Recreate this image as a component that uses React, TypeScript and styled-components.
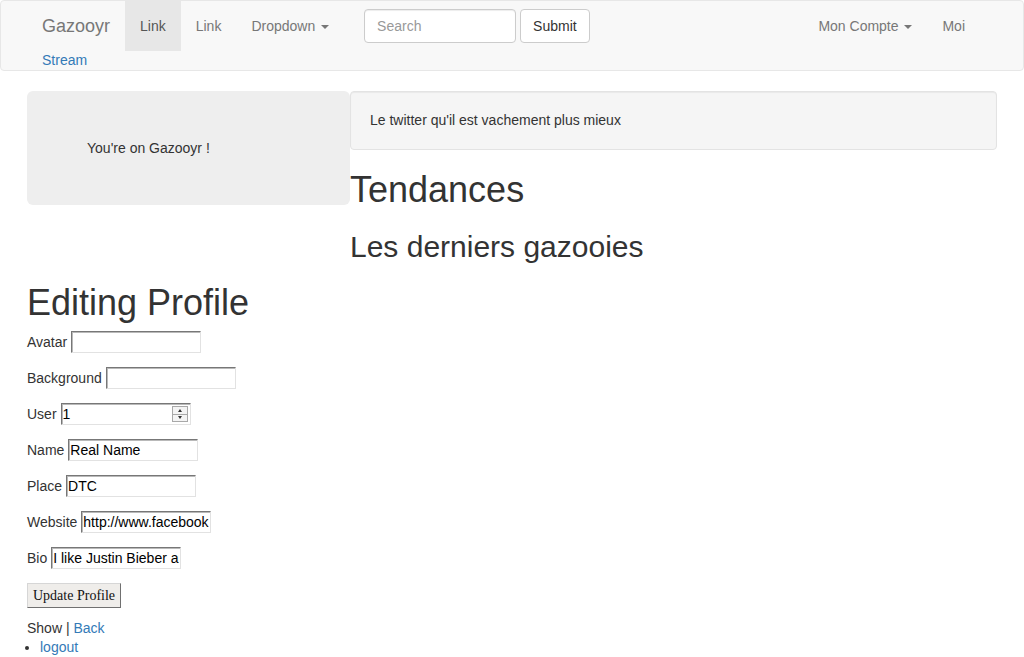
import React from "react";
import styled, { createGlobalStyle } from "styled-components";

const Global = createGlobalStyle`
  html, body { margin: 0; padding: 0; background: #fff; }
  body {
    font-family: "Liberation Sans", Arial, sans-serif;
    font-size: 14px;
    line-height: 1.42857;
    color: #333;
  }
  * { box-sizing: border-box; }
`;

const Navbar = styled.nav`
  background: #f8f8f8;
  border: 1px solid #e7e7e7;
  border-radius: 4px;
  margin-bottom: 20px;
`;

const Container = styled.div<{ $pad?: number }>`
  width: 970px;
  margin: 0 auto;
  padding: 0 ${(p) => p.$pad ?? 0}px;
`;

const NavRow = styled.div`
  display: flex;
  align-items: flex-start;
  height: 50px;
`;

const Brand = styled.a`
  display: block;
  margin-left: -15px;
  padding: 15px;
  height: 50px;
  font-size: 18px;
  line-height: 20px;
  color: #777;
  text-decoration: none;
`;

const NavList = styled.ul`
  display: flex;
  list-style: none;
  margin: 0;
  padding: 0;
`;

const NavItem = styled.a<{ $active?: boolean }>`
  display: block;
  padding: 15px;
  line-height: 20px;
  height: 50px;
  color: ${(p) => (p.$active ? "#555" : "#777")};
  background: ${(p) => (p.$active ? "#e7e7e7" : "transparent")};
  text-decoration: none;
  white-space: nowrap;
`;

const Caret = styled.span`
  display: inline-block;
  width: 0;
  height: 0;
  margin-left: 2px;
  vertical-align: middle;
  border-top: 4px solid;
  border-left: 4px solid transparent;
  border-right: 4px solid transparent;
`;

const SearchForm = styled.form`
  display: flex;
  gap: 4px;
  margin: 8px 0 0 20px;
`;

const SearchInput = styled.input`
  width: 152px;
  height: 34px;
  padding: 6px 12px;
  font-family: inherit;
  font-size: 14px;
  color: #555;
  background: #fff;
  border: 1px solid #ccc;
  border-radius: 4px;
  box-shadow: inset 0 1px 1px rgba(0, 0, 0, 0.075);
  &::placeholder { color: #999; }
`;

const SubmitButton = styled.button`
  height: 34px;
  padding: 6px 12px;
  font-family: inherit;
  font-size: 14px;
  line-height: 20px;
  color: #333;
  background: #fff;
  border: 1px solid #ccc;
  border-radius: 4px;
`;

const RightNav = styled(NavList)`
  margin-left: auto;
  margin-right: 2px;
`;

const StreamLink = styled.a`
  display: block;
  line-height: 19px;
  color: #337ab7;
  text-decoration: none;
`;

const Row = styled.div`
  display: flex;
  align-items: flex-start;
`;

const Jumbotron = styled.div`
  width: 323px;
  flex: none;
  padding: 47px 60px;
  background: #eee;
  border-radius: 6px;
  line-height: 20px;
`;

const MainCol = styled.div`
  flex: 1;
`;

const Well = styled.div`
  min-height: 20px;
  padding: 19px;
  background: #f5f5f5;
  border: 1px solid #e3e3e3;
  border-radius: 4px;
  box-shadow: inset 0 1px 1px rgba(0, 0, 0, 0.05);
  line-height: 19px;
`;

const H1 = styled.h1<{ $mb?: number }>`
  font-size: 36px;
  font-weight: 500;
  line-height: 1.1;
  margin: 20px 0 ${(p) => p.$mb ?? 10}px;
  color: #333;
`;

const H2 = styled.h2`
  font-size: 30px;
  font-weight: 500;
  line-height: 1.1;
  margin: 20px 0 0;
  color: #333;
`;

const Form = styled.form`
  display: flex;
  flex-direction: column;
  align-items: flex-start;
  gap: 14px;
`;

const Field = styled.div`
  display: flex;
  align-items: center;
  gap: 4px;
  height: 22px;
`;

const Label = styled.label`
  line-height: 20px;
  color: #333;
`;

const InputWrap = styled.span`
  position: relative;
  display: inline-block;
`;

const TextInput = styled.input`
  width: 130px;
  height: 22px;
  padding: 1px 1px;
  font-family: "Liberation Sans", Arial, sans-serif;
  font-size: 14px;
  color: #000;
  background: #fff;
  border-style: solid;
  border-width: 1px;
  border-color: #777 #e2e2e2 #e2e2e2 #777;
  box-shadow: inset 1px 1px 0 #b9b9b9;
  outline: none;
`;

const Spinner = styled.span`
  position: absolute;
  right: 3px;
  top: 3px;
  width: 16px;
  height: 16px;
  display: flex;
  flex-direction: column;
  border: 1px solid #a8a8a8;
  background: #f4f4f4;
`;

const SpinHalf = styled.span<{ $down?: boolean }>`
  flex: 1;
  display: flex;
  align-items: center;
  justify-content: center;
  border-top: ${(p) => (p.$down ? "1px solid #a8a8a8" : "none")};
  &::after {
    content: "";
    width: 0;
    height: 0;
    border-left: 2.5px solid transparent;
    border-right: 2.5px solid transparent;
    ${(p) =>
      p.$down ? "border-top: 3px solid #333;" : "border-bottom: 3px solid #333;"}
  }
`;

const UpdateButton = styled.button`
  height: 25px;
  padding: 1px 5px;
  font-family: "Liberation Serif", "Times New Roman", serif;
  font-size: 14px;
  color: #111;
  background: #efedea;
  border-style: solid;
  border-width: 1px;
  border-color: #d6d6d6 #707070 #707070 #d6d6d6;
`;

const Links = styled.div`
  margin-top: 10px;
  line-height: 20px;
`;

const Link = styled.a`
  color: #337ab7;
  text-decoration: none;
`;

const List = styled.ul`
  margin: 0;
  padding-left: 13px;
  line-height: 19px;
`;

export default function App() {
  return (
    <>
      <Global />
      <Navbar>
        <Container $pad={15}>
          <NavRow>
            <Brand href="#">Gazooyr</Brand>
            <NavList>
              <li><NavItem $active href="#">Link</NavItem></li>
              <li><NavItem href="#">Link</NavItem></li>
              <li><NavItem href="#">Dropdown <Caret /></NavItem></li>
            </NavList>
            <SearchForm onSubmit={(e) => e.preventDefault()}>
              <SearchInput placeholder="Search" />
              <SubmitButton type="submit">Submit</SubmitButton>
            </SearchForm>
            <RightNav>
              <li><NavItem href="#">Mon Compte <Caret /></NavItem></li>
              <li><NavItem href="#">Moi</NavItem></li>
            </RightNav>
          </NavRow>
          <StreamLink href="#">Stream</StreamLink>
        </Container>
      </Navbar>
      <Container>
        <Row>
          <Jumbotron>You're on Gazooyr !</Jumbotron>
          <MainCol>
            <Well>Le twitter qu'il est vachement plus mieux</Well>
            <H1>Tendances</H1>
            <H2>Les derniers gazooies</H2>
          </MainCol>
        </Row>
        <H1 $mb={9}>Editing Profile</H1>
        <Form onSubmit={(e) => e.preventDefault()}>
          <Field>
            <Label>Avatar</Label>
            <TextInput defaultValue="" />
          </Field>
          <Field>
            <Label>Background</Label>
            <TextInput defaultValue="" />
          </Field>
          <Field>
            <Label>User</Label>
            <InputWrap>
              <TextInput defaultValue="1" />
              <Spinner>
                <SpinHalf />
                <SpinHalf $down />
              </Spinner>
            </InputWrap>
          </Field>
          <Field>
            <Label>Name</Label>
            <TextInput defaultValue="Real Name" />
          </Field>
          <Field>
            <Label>Place</Label>
            <TextInput defaultValue="DTC" />
          </Field>
          <Field>
            <Label>Website</Label>
            <TextInput defaultValue="http://www.facebook.com" />
          </Field>
          <Field>
            <Label>Bio</Label>
            <TextInput defaultValue="I like Justin Bieber and more" />
          </Field>
          <UpdateButton type="submit">Update Profile</UpdateButton>
        </Form>
        <Links>
          Show | <Link href="#">Back</Link>
        </Links>
        <List>
          <li><Link href="#">logout</Link></li>
        </List>
      </Container>
    </>
  );
}
